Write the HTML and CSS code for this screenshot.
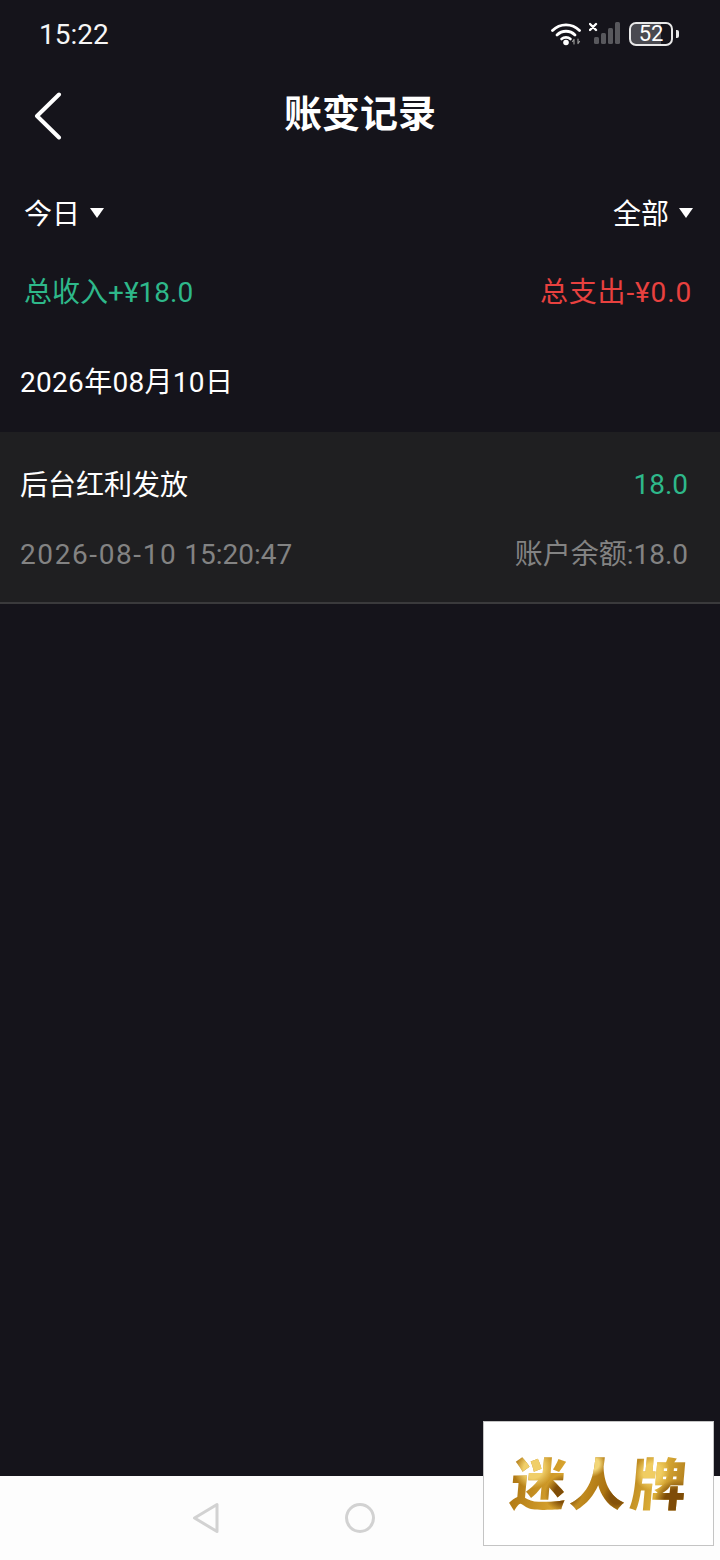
FILE: index.html
```html
<!doctype html>
<html>
<head>
<meta charset="utf-8">
<title>账变记录</title>
<link rel="stylesheet" href="styles.css">
</head>
<body>
<div class="phone">
	<div class="status">
		<span class="time">15:22</span>
		<div class="status-icons">
			<svg class="wifi" width="32" height="24" viewBox="0 0 32 24" fill="none" stroke="#fff" stroke-linecap="round">
				<path d="M1.500 8.500C9 1 21 1 28.500 8.500" stroke-width="2.800"/>
				<path d="M6 13C11 8 19 8 24 13" stroke-width="2.800"/>
				<path d="M10.500 17C13 14.800 17 14.800 19.500 17" stroke-width="2.600"/>
				<circle cx="15" cy="20.500" r="2.800" fill="#fff" stroke="none"/>
				<path d="M23 22V17.500M23 17.500L21.500 19.500M27 17V21.500M27 21.500L28.500 19.500" stroke="#999" stroke-width="1.200"/>
			</svg>
			<svg class="signal" width="34" height="26" viewBox="0 0 34 26">
				<path d="M1 3L7 9M7 3L1 9" stroke="#fff" stroke-width="2.400" stroke-linecap="round"/>
				<rect x="5" y="16" width="5" height="7" rx="1.500" fill="#58585d"/>
				<rect x="12" y="12" width="5" height="11" rx="1.500" fill="#58585d"/>
				<rect x="19" y="7" width="5" height="16" rx="1.500" fill="#58585d"/>
				<rect x="26" y="1" width="5" height="22" rx="1.500" fill="#58585d"/>
			</svg>
			<div class="battery"><span class="battery-num">52</span></div>
			<span class="battery-tip"></span>
		</div>
	</div>

	<div class="header">
		<svg class="back" width="30" height="48" viewBox="0 0 30 48" fill="none">
			<path d="M26 2.500L4 24L26 45.500" stroke="#fff" stroke-width="4" stroke-linecap="round" stroke-linejoin="round"/>
		</svg>
		<h1 class="title">账变记录</h1>
	</div>

	<div class="filters">
		<div class="filter">今日<i class="arrow"></i></div>
		<div class="filter">全部<i class="arrow"></i></div>
	</div>

	<div class="totals">
		<span class="green">总收入+¥18.0</span>
		<span class="red">总支出-¥0.0</span>
	</div>

	<div class="date">2026年08月10日</div>

	<div class="record">
		<div class="record-row">
			<span class="record-name">后台红利发放</span>
			<span class="record-num">18.0</span>
		</div>
		<div class="record-row record-sub">
			<span><span class="day">2026-08-10</span> 15:20:47</span>
			<span>账户余额:18.0</span>
		</div>
	</div>

	<div class="space"></div>

	<div class="navbar">
		<svg class="nav-back" width="28" height="32" viewBox="0 0 28 32" fill="none">
			<path d="M25 2.500V29.500L2.500 16Z" stroke="#d2d2d2" stroke-width="3" stroke-linejoin="round"/>
		</svg>
		<span class="nav-home"></span>
	</div>

	<div class="logo"><span class="logo-text">迷人牌</span></div>
</div>
</body>
</html>
```

FILE: styles.css
```css
*{margin:0;padding:0;box-sizing:border-box;}
body{background:#15141b;font-family:"Roboto","Noto Sans CJK SC",sans-serif;color:#fff;}
.phone{position:relative;width:720px;height:1560px;display:flex;flex-direction:column;overflow:hidden;}

.status{height:68px;padding:0 41px 0 39px;display:flex;justify-content:space-between;align-items:center;}
.time{font-size:28px;color:#f6f6f6;}
.status-icons{display:flex;align-items:center;}
.wifi{margin-right:6px;}
.signal{margin-right:6px;}
.battery{width:44px;height:24px;border:2px solid #e8e8e8;border-radius:7px;background:linear-gradient(to right,#4a4a50 76%,transparent 76%);display:flex;align-items:center;justify-content:center;}
.battery-num{font-size:22px;line-height:20px;color:#fff;}
.battery-tip{width:3px;height:8px;margin-left:3px;background:#e8e8e8;border-radius:0 2px 2px 0;}

.header{height:92px;position:relative;display:flex;align-items:center;justify-content:center;}
.back{position:absolute;left:33px;top:24px;}
.title{font-size:38px;font-weight:700;line-height:96px;}

.filters{height:106px;padding:4px 27px 0 24px;display:flex;justify-content:space-between;align-items:center;}
.filter{font-size:28px;line-height:36px;display:flex;align-items:center;color:#fff;}
.filter .arrow{margin-top:-4px;margin-left:10px;}
.arrow{width:0;height:0;border-left:7px solid transparent;border-right:7px solid transparent;border-top:10px solid #fff;}

.totals{height:52px;padding:2px 28px 0 24px;display:flex;justify-content:space-between;align-items:center;font-size:28px;line-height:48px;}
.green{color:#2eb88a;}
.red{color:#e8413f;letter-spacing:.85px;}

.date{height:114px;padding:10px 0 0 20px;display:flex;align-items:center;font-size:28px;letter-spacing:.3px;}

.record{height:172px;background:#1f1f21;border-bottom:2px solid #3a3a3c;padding:0 32px 0 20px;}
.record-row{display:flex;justify-content:space-between;align-items:center;font-size:28px;line-height:40px;}
.record-row:first-child{height:104px;padding-top:4px;}
.record-num{color:#2eb88a;margin-top:-2px;}
.record-sub{height:40px;margin-top:-1px;color:#838383;}
.day{letter-spacing:1.600px;}

.space{flex:1;}

.navbar{height:84px;background:#fdfdfd;display:flex;align-items:center;padding-left:192px;}
.nav-back{display:block;}
.nav-home{width:30px;height:30px;margin-left:125px;border:3px solid #d2d2d2;border-radius:50%;}

.logo{position:absolute;left:483px;top:1421px;width:231px;height:125px;background:#fff;border:1px solid #c4c4c4;display:flex;align-items:center;justify-content:center;}
.logo-text{font-size:56px;font-weight:900;letter-spacing:4px;margin-right:-4px;color:transparent;background:radial-gradient(circle at 12% 35%,#f0cf6a 0 6%,transparent 12%),radial-gradient(circle at 30% 65%,#7e4c08 0 7%,transparent 14%),radial-gradient(circle at 45% 30%,#f2d678 0 5%,transparent 11%),radial-gradient(circle at 60% 70%,#85520a 0 6%,transparent 12%),radial-gradient(circle at 78% 40%,#f0cd62 0 6%,transparent 12%),radial-gradient(circle at 92% 75%,#7e4c08 0 6%,transparent 12%),linear-gradient(100deg,#a8700f,#d9a52f 30%,#a8700f 55%,#dcae38 80%,#a06a10);-webkit-background-clip:text;background-clip:text;transform:translateY(-3px) skewX(-5deg);}
```
